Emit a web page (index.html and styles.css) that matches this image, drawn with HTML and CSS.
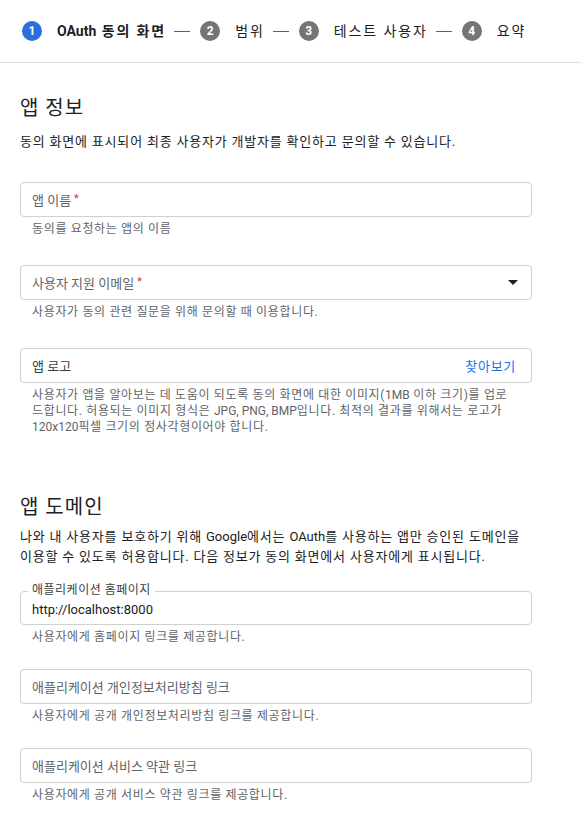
FILE: index.html
```html
<!DOCTYPE html>
<html lang="ko">
<head>
<meta charset="utf-8">
<link rel="stylesheet" href="styles.css">
</head>
<body>
<nav class="stepper">
  <div class="step active"><span class="num">1</span><span class="label"><b class="latin">OAuth</b> 동의 화면</span></div>
  <span class="dash"></span>
  <div class="step"><span class="num">2</span><span class="label">범위</span></div>
  <span class="dash"></span>
  <div class="step"><span class="num">3</span><span class="label">테스트 사용자</span></div>
  <span class="dash"></span>
  <div class="step"><span class="num">4</span><span class="label">요약</span></div>
</nav>

<main class="content">
  <section class="section first">
    <h2 class="title">앱 정보</h2>
    <p class="desc">동의 화면에 표시되어 최종 사용자가 개발자를 확인하고 문의할 수 있습니다.</p>

    <div class="field">
      <div class="box"><span class="ph">앱 이름</span><span class="req">*</span></div>
      <div class="hint">동의를 요청하는 앱의 이름</div>
    </div>

    <div class="field">
      <div class="box"><span class="ph">사용자 지원 이메일</span><span class="req">*</span>
        <svg class="arrow" width="10" height="5" viewBox="0 0 10 5"><path d="M0 0h10L5 5z" fill="#202124"/></svg>
      </div>
      <div class="hint">사용자가 동의 관련 질문을 위해 문의할 때 이용합니다.</div>
    </div>

    <div class="field last">
      <div class="box"><span class="ph dark">앱 로고</span><span class="browse">찾아보기</span></div>
      <div class="hint">사용자가 앱을 알아보는 데 도움이 되도록 동의 화면에 대한 이미지(<span class="latin">1MB</span> 이하 크기)를 업로<br>드합니다. 허용되는 이미지 형식은 <span class="latin">JPG, PNG, BMP</span>입니다. 최적의 결과를 위해서는 로고가<br><span class="latin">120x120</span>픽셀 크기의 정사각형이어야 합니다.</div>
    </div>
  </section>

  <section class="section second">
    <h2 class="title">앱 도메인</h2>
    <p class="desc two">나와 내 사용자를 보호하기 위해 <span class="latin">Google</span>에서는 <span class="latin">OAuth</span>를 사용하는 앱만 승인된 도메인을<br>이용할 수 있도록 허용합니다. 다음 정보가 동의 화면에서 사용자에게 표시됩니다.</p>

    <div class="field">
      <div class="box filled"><span class="float">애플리케이션 홈페이지</span><span class="value">http://localhost:8000</span></div>
      <div class="hint">사용자에게 홈페이지 링크를 제공합니다.</div>
    </div>

    <div class="field">
      <div class="box"><span class="ph">애플리케이션 개인정보처리방침 링크</span></div>
      <div class="hint">사용자에게 공개 개인정보처리방침 링크를 제공합니다.</div>
    </div>

    <div class="field">
      <div class="box"><span class="ph">애플리케이션 서비스 약관 링크</span></div>
      <div class="hint">사용자에게 공개 서비스 약관 링크를 제공합니다.</div>
    </div>
  </section>
</main>
</body>
</html>
```

FILE: styles.css
```css
* { box-sizing: border-box; }

body {
  margin: 0;
  background: #fff;
  color: #202124;
  font-family: Roboto, "Noto Sans CJK KR", sans-serif;
}

.latin { letter-spacing: 0; }

.stepper {
  display: flex;
  align-items: center;
  height: 63px;
  padding: 0 0 0 22px;
  border-bottom: 1px solid #e0e0e0;
}

.step {
  display: flex;
  align-items: center;
  gap: 15px;
}

.num {
  width: 20px;
  height: 20px;
  border-radius: 50%;
  background: #757575;
  color: #fff;
  font-family: Roboto, sans-serif;
  font-size: 12px;
  font-weight: 700;
  display: flex;
  align-items: center;
  justify-content: center;
}

.step.active .num { background: #2a6fdb; }

.label {
  font-size: 14px;
  line-height: 20px;
  letter-spacing: 1.9px;
  color: #202124;
}

.step.active .label { font-weight: 700; }

.label .latin { font-family: Roboto, sans-serif; font-weight: 700; letter-spacing: 0; }

.dash {
  width: 16px;
  height: 1px;
  background: #5f6368;
  margin: 0 10px 0 8px;
}

.content {
  padding: 0 40px 0 20px;
}

.title {
  margin: 0;
  font-size: 20px;
  font-weight: 400;
  line-height: 28px;
  letter-spacing: 1px;
}

.section.first { padding-top: 31px; }
.section.second { padding-top: 58px; }

.desc {
  margin: 10px 0 30px;
  font-size: 13px;
  line-height: 20px;
  letter-spacing: 0.8px;
  white-space: nowrap;
}

.desc.two { margin: 6px 0 24px; }

.field { margin-bottom: 28px; }
.field.last { margin-bottom: 0; }
.section.second .field { margin-bottom: 24px; }

.box {
  position: relative;
  width: 512px;
  height: 35px;
  border: 1px solid #d0d0d0;
  border-radius: 4px;
  display: flex;
  align-items: center;
  padding: 0 12px 0 11px;
  font-size: 13px;
}

.ph { color: #5f6368; }
.ph.dark { color: #3c4043; }

.req {
  color: #d93025;
  font-size: 11px;
  margin-left: 3px;
  margin-top: -2px;
}

.arrow { margin-left: auto; margin-right: 1px; }

.browse {
  margin-left: auto;
  margin-right: 3px;
  color: #1a73e8;
  font-size: 13px;
  letter-spacing: 0.7px;
}

.box.filled { height: 34px; }

.float {
  position: absolute;
  top: -10px;
  left: 7px;
  padding: 0 4px;
  background: #fff;
  font-size: 12px;
  line-height: 16px;
  letter-spacing: 0.5px;
  color: #3c4043;
}

.value { color: #202124; font-size: 13px; padding-top: 2px; }

.hint {
  margin-top: 4px;
  padding: 0 12px;
  font-size: 12px;
  line-height: 16px;
  letter-spacing: 0.65px;
  color: #5f6368;
  white-space: nowrap;
}
```
